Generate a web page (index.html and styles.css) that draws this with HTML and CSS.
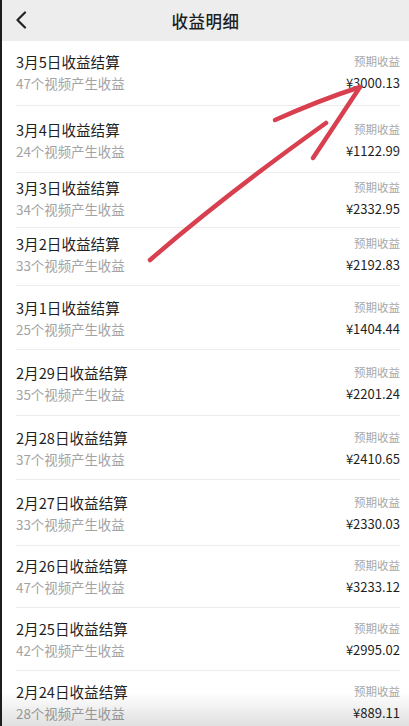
FILE: index.html
```html
<!DOCTYPE html>
<html lang="zh">
<head>
<meta charset="utf-8">
<title>收益明细</title>
<link rel="stylesheet" href="styles.css">
</head>
<body>
<div class="screen">
  <header class="topbar">
    <svg class="back" viewBox="0 0 12 18" width="12" height="18"><path d="M10 1.5 L2.5 9 L10 16.5" fill="none" stroke="#222" stroke-width="2.2" stroke-linecap="round" stroke-linejoin="round"/></svg>
    <h1 class="title">收益明细</h1>
  </header>
  <ul class="list">
    <li class="row"><div class="left"><div class="name">3月5日收益结算</div><div class="sub">47个视频产生收益</div></div><div class="right"><div class="label">预期收益</div><div class="amount">¥3000.13</div></div></li>
    <li class="row"><div class="left"><div class="name">3月4日收益结算</div><div class="sub">24个视频产生收益</div></div><div class="right"><div class="label">预期收益</div><div class="amount">¥1122.99</div></div></li>
    <li class="row"><div class="left"><div class="name">3月3日收益结算</div><div class="sub">34个视频产生收益</div></div><div class="right"><div class="label">预期收益</div><div class="amount">¥2332.95</div></div></li>
    <li class="row"><div class="left"><div class="name">3月2日收益结算</div><div class="sub">33个视频产生收益</div></div><div class="right"><div class="label">预期收益</div><div class="amount">¥2192.83</div></div></li>
    <li class="row"><div class="left"><div class="name">3月1日收益结算</div><div class="sub">25个视频产生收益</div></div><div class="right"><div class="label">预期收益</div><div class="amount">¥1404.44</div></div></li>
    <li class="row"><div class="left"><div class="name">2月29日收益结算</div><div class="sub">35个视频产生收益</div></div><div class="right"><div class="label">预期收益</div><div class="amount">¥2201.24</div></div></li>
    <li class="row"><div class="left"><div class="name">2月28日收益结算</div><div class="sub">37个视频产生收益</div></div><div class="right"><div class="label">预期收益</div><div class="amount">¥2410.65</div></div></li>
    <li class="row"><div class="left"><div class="name">2月27日收益结算</div><div class="sub">33个视频产生收益</div></div><div class="right"><div class="label">预期收益</div><div class="amount">¥2330.03</div></div></li>
    <li class="row"><div class="left"><div class="name">2月26日收益结算</div><div class="sub">47个视频产生收益</div></div><div class="right"><div class="label">预期收益</div><div class="amount">¥3233.12</div></div></li>
    <li class="row"><div class="left"><div class="name">2月25日收益结算</div><div class="sub">42个视频产生收益</div></div><div class="right"><div class="label">预期收益</div><div class="amount">¥2995.02</div></div></li>
    <li class="row"><div class="left"><div class="name">2月24日收益结算</div><div class="sub">28个视频产生收益</div></div><div class="right"><div class="label">预期收益</div><div class="amount">¥889.11</div></div></li>
  </ul>
  <svg class="arrow" viewBox="0 0 409 726" width="409" height="726">
    <g fill="none" stroke="#d9404f" stroke-width="4.5" stroke-linecap="round" stroke-linejoin="round">
      <path d="M150 260 Q 225 195 326 123"/>
      <path d="M275 120 Q 320 100 360 87"/>
      <path d="M360 87 Q 335 125 313 158"/>
    </g>
  </svg>
  <div class="shade"></div>
</div>
</body>
</html>
```
FILE: styles.css
```css
* { box-sizing: border-box; }
html, body { margin: 0; padding: 0; background: #fff; }
body { font-family: "Noto Sans CJK SC", "Noto Sans", sans-serif; }
.screen {
  position: relative;
  width: 409px;
  height: 726px;
  overflow: hidden;
  background: #fff;
  border-left: 2px solid #1d1d1d;
}
.topbar {
  height: 41px;
  background: #ededed;
  display: flex;
  align-items: center;
  justify-content: center;
  position: relative;
}
.back { position: absolute; left: 13px; top: 11px; }
.title {
  margin: 0;
  font-size: 16.5px;
  font-weight: 500;
  color: #1e1e1e;
  letter-spacing: 0.5px;
}
.list { list-style: none; margin: 0; padding: 0 9px 0 14px; }
.row {
  display: flex;
  justify-content: space-between;
  align-items: flex-start;
  border-bottom: 1px solid #ececec;
  padding-bottom: 12px;
}
.row:nth-child(1) { padding-top: 10px; height: 65px; }
.row:nth-child(2) { padding-top: 13px; height: 67px; }
.row:nth-child(3) { padding-top: 4px; height: 55px; }
.row:nth-child(4) { padding-top: 5px; height: 58px; }
.row:nth-child(5) { padding-top: 11px; height: 64px; }
.row:nth-child(6) { padding-top: 12px; height: 66px; }
.row:nth-child(7) { padding-top: 11px; height: 64px; }
.row:nth-child(8) { padding-top: 12px; height: 66px; }
.row:nth-child(9) { padding-top: 9px; height: 62px; }
.row:nth-child(10) { padding-top: 10px; height: 63px; }
.row:nth-child(11) { padding-top: 10px; height: 63px; border-bottom: none; }
.left { display: flex; flex-direction: column; gap: 1px; }
.name { font-size: 14.6px; color: #1f1f1f; line-height: 21px; }
.sub { font-size: 13.4px; color: #a3a3a3; line-height: 21px; }
.right { display: flex; flex-direction: column; align-items: flex-end; gap: 1px; }
.label { font-size: 11.5px; color: #a8a8a8; line-height: 21px; }
.amount { font-size: 13px; color: #1f1f1f; line-height: 20px; }
.arrow { position: absolute; left: -2px; top: 0; pointer-events: none; }
.shade {
  position: absolute;
  left: 0; right: 0; bottom: 0;
  height: 34px;
  background: linear-gradient(to bottom, rgba(0,0,0,0), rgba(0,0,0,0.12));
  pointer-events: none;
}
```
